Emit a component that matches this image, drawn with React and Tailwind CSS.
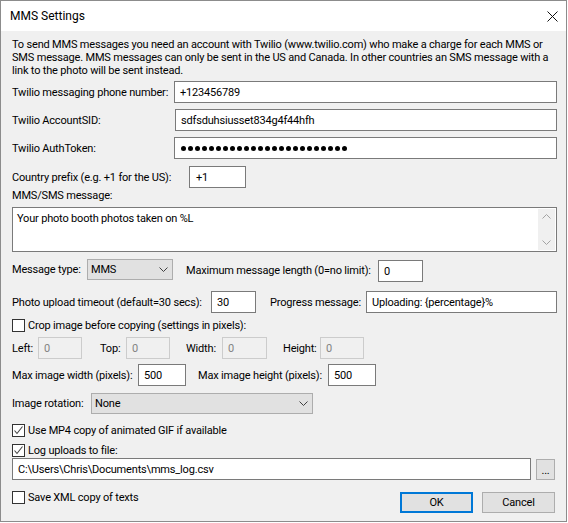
import React from "react";

const TextBox = ({ className = "", value = "", disabled = false }) => (
  <div
    className={`h-[22px] flex items-center pl-[5px] whitespace-nowrap overflow-hidden ${
      disabled
        ? "border border-[#cccccc] bg-[#f0f0f0] text-[#838383]"
        : "border border-[#7a7a7a] bg-white"
    } ${className}`}
  >
    {value}
  </div>
);

const Chevron = () => (
  <svg width="9" height="5" viewBox="0 0 9 5" className="shrink-0">
    <polyline points="0.5,0.5 4.5,4.5 8.5,0.5" fill="none" stroke="#404040" strokeWidth="1" />
  </svg>
);

const Select = ({ className = "", value }) => (
  <div
    className={`h-[21px] flex items-center justify-between pl-[3px] pr-[4px] border border-[#adadad] bg-[#e1e1e1] ${className}`}
  >
    <span>{value}</span>
    <Chevron />
  </div>
);

const CheckBox = ({ checked = false, label }) => (
  <div className="flex items-center h-[13px]">
    <div className="w-[13px] h-[13px] border border-[#333333] bg-white flex items-center justify-center shrink-0">
      {checked && (
        <svg width="11" height="11" viewBox="0 0 11 11">
          <polyline points="1.5,5.5 4,8.5 9.5,1.5" fill="none" stroke="#444444" strokeWidth="1.1" />
        </svg>
      )}
    </div>
    <span className="ml-[3px]">{label}</span>
  </div>
);

const Button = ({ children, primary = false, className = "" }) => (
  <div
    className={`h-[21px] flex items-center justify-center bg-[#e1e1e1] ${
      primary ? "border-2 border-[#0078d7]" : "border border-[#adadad]"
    } ${className}`}
  >
    {children}
  </div>
);

export default function App() {
  const dots = Array.from({ length: 24 });

  return (
    <div className="w-[568px] h-[523px] bg-white font-['Roboto',sans-serif] text-[11px] tracking-[-0.18px] leading-[13px] text-black whitespace-nowrap overflow-hidden">
      <div className="w-[567px] h-[522px] border border-[#8c8c8c] bg-[#f0f0f0] flex flex-col">
        {/* title bar */}
        <div className="h-[30px] bg-white flex items-center justify-between pl-[9px] pr-[8px] text-[12px] tracking-normal shrink-0">
          <span>MMS Settings</span>
          <svg width="11" height="11" viewBox="0 0 11 11">
            <line x1="0.5" y1="0.5" x2="10.5" y2="10.5" stroke="#111" strokeWidth="1" />
            <line x1="10.5" y1="0.5" x2="0.5" y2="10.5" stroke="#111" strokeWidth="1" />
          </svg>
        </div>

        <div className="flex flex-col pl-[11px] pr-[9px]">
          <p className="mt-[7px]">
            To send MMS messages you need an account with Twilio (www.twilio.com) who make a charge for each MMS or
            <br />
            SMS message. MMS messages can only be sent in the US and Canada. In other countries an SMS message with a
            <br />
            link to the photo will be sent instead.
          </p>

          <div className="mt-[4px] flex items-center">
            <span className="w-[162px] shrink-0">Twilio messaging phone number:</span>
            <TextBox className="flex-1" value="+123456789" />
          </div>
          <div className="mt-[6px] flex items-center">
            <span className="w-[163px] shrink-0">Twilio AccountSID:</span>
            <TextBox className="flex-1" value="sdfsduhsiusset834g4f44hfh" />
          </div>
          <div className="mt-[6px] flex items-center">
            <span className="w-[162px] shrink-0">Twilio AuthToken:</span>
            <div className="flex-1 h-[22px] border border-[#7a7a7a] bg-white flex items-center gap-[2px] pl-[6px]">
              {dots.map((_, i) => (
                <span key={i} className="w-[5px] h-[5px] rounded-full bg-black" />
              ))}
            </div>
          </div>
          <div className="mt-[7px] flex items-center">
            <span className="w-[177px] shrink-0">Country prefix (e.g. +1 for the US):</span>
            <TextBox className="w-[57px] pl-[6px]" value="+1" />
          </div>

          <span className="mt-[1px]">MMS/SMS message:</span>
          <div className="mt-[5px] h-[45px] border border-[#7a7a7a] bg-white flex">
            <div className="flex-1 pl-[4px] pt-[4px]">Your photo booth photos taken on %L</div>
            <div className="w-[17px] mr-[1px] my-[1px] bg-[#f0f0f0] flex flex-col items-center justify-between py-[5px]">
              <svg width="9" height="5" viewBox="0 0 9 5">
                <polyline points="0.5,4.5 4.5,0.5 8.5,4.5" fill="none" stroke="#a3a3a3" strokeWidth="1" />
              </svg>
              <svg width="9" height="5" viewBox="0 0 9 5">
                <polyline points="0.5,0.5 4.5,4.5 8.5,0.5" fill="none" stroke="#a3a3a3" strokeWidth="1" />
              </svg>
            </div>
          </div>

          <div className="mt-[7px] flex items-start">
            <span className="w-[75px] shrink-0 h-[21px] flex items-center">Message type:</span>
            <Select className="w-[86px]" value="MMS" />
            <span className="ml-[13px] w-[192px] shrink-0 h-[23px] flex items-center">
              Maximum message length (0=no limit):
            </span>
            <TextBox className="w-[45px] mt-[1px]" value="0" />
          </div>

          <div className="mt-[9px] flex items-center">
            <span className="w-[199px] shrink-0">Photo upload timeout (default=30 secs):</span>
            <TextBox className="w-[45px]" value="30" />
            <span className="ml-[14px] w-[96px] shrink-0">Progress message:</span>
            <TextBox className="flex-1" value="Uploading: {percentage}%" />
          </div>

          <div className="mt-[6px]">
            <CheckBox label="Crop image before copying (settings in pixels):" />
          </div>

          <div className="mt-[5px] flex items-center">
            <span className="w-[26px] shrink-0">Left:</span>
            <TextBox disabled className="w-[44px]" value="0" />
            <span className="ml-[18px] w-[26px] shrink-0">Top:</span>
            <TextBox disabled className="w-[44px]" value="0" />
            <span className="ml-[16px] w-[36px] shrink-0">Width:</span>
            <TextBox disabled className="w-[45px]" value="0" />
            <span className="ml-[16px] w-[37px] shrink-0">Height:</span>
            <TextBox disabled className="w-[44px]" value="0" />
          </div>

          <div className="mt-[5px] flex items-center">
            <span className="w-[126px] shrink-0">Max image width (pixels):</span>
            <TextBox className="w-[48px]" value="500" />
            <span className="ml-[12px] w-[130px] shrink-0">Max image height (pixels):</span>
            <TextBox className="w-[48px]" value="500" />
          </div>

          <div className="mt-[7px] flex items-center">
            <span className="w-[79px] shrink-0">Image rotation:</span>
            <Select className="w-[222px]" value="None" />
          </div>

          <div className="mt-[10px]">
            <CheckBox checked label="Use MP4 copy of animated GIF if available" />
          </div>
          <div className="mt-[7px]">
            <CheckBox checked label="Log uploads to file:" />
          </div>

          <div className="mt-[1px] flex items-start">
            <TextBox className="w-[519px]" value="C:\Users\Chris\Documents\mms_log.csv" />
            <Button className="ml-[5px] w-[19px] mt-[1px] items-end pb-[2px]">...</Button>
          </div>

          <div className="mt-[11px] flex items-start">
            <CheckBox label="Save XML copy of texts" />
            <Button primary className="ml-auto w-[73px] mt-[1px]">
              OK
            </Button>
            <Button className="ml-[9px] mr-[2px] w-[73px] mt-[1px]">Cancel</Button>
          </div>
        </div>
      </div>
    </div>
  );
}
